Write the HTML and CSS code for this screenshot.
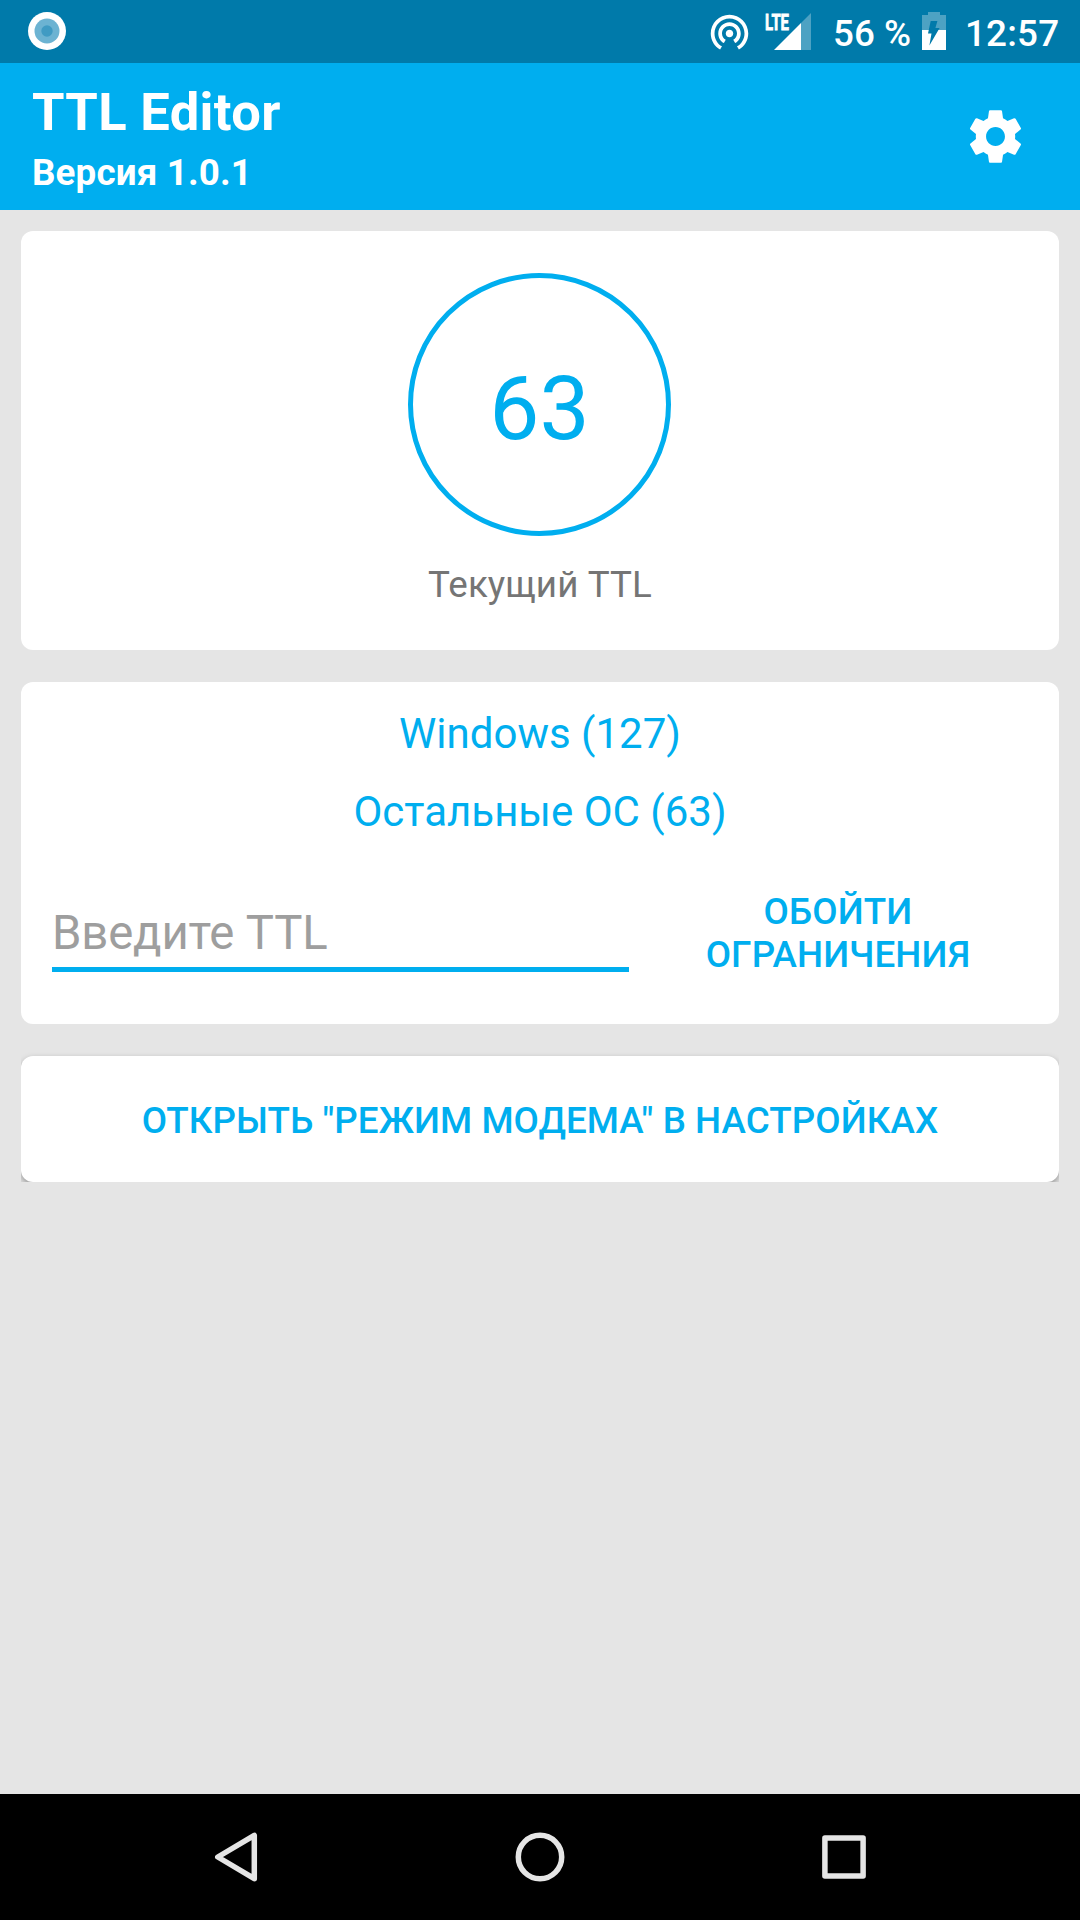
FILE: index.html
```html
<!DOCTYPE html>
<html lang="ru">
<head>
  <meta charset="utf-8" />
  <meta name="viewport" content="width=device-width, initial-scale=1" />
  <title>TTL Editor</title>
  <link rel="stylesheet" href="styles.css">
</head>
<body>
  <div class="screen">
    <div class="status">
      <svg class="notif" width="38" height="38" viewBox="0 0 38 38">
        <circle cx="19" cy="19" r="19" fill="#fff"/>
        <circle cx="19" cy="19" r="12.5" fill="#6cb3d2"/>
        <circle cx="19" cy="19" r="5.7" fill="#409bc3"/>
      </svg>
      <svg class="hotspot" width="45" height="45" viewBox="0 0 24 24">
        <path fill="#fff" d="M12 11c-1.1 0-2 .9-2 2s.9 2 2 2 2-.9 2-2-.9-2-2-2zm6 2c0-3.31-2.69-6-6-6s-6 2.69-6 6c0 2.22 1.21 4.15 3 5.19l1-1.74c-1.19-.7-2-1.97-2-3.45 0-2.21 1.79-4 4-4s4 1.79 4 4c0 1.48-.81 2.75-2 3.45l1 1.74c1.79-1.04 3-2.97 3-5.19zM12 3C6.48 3 2 7.48 2 13c0 3.7 2.01 6.92 4.99 8.65l1-1.73C5.61 18.53 4 15.96 4 13c0-4.42 3.58-8 8-8s8 3.58 8 8c0 2.96-1.61 5.53-4 6.92l1 1.73c2.99-1.73 5-4.95 5-8.65 0-5.52-4.48-10-10-10z"/>
      </svg>
      <svg class="signal" width="47" height="46" viewBox="0 -8 47 46">
        <path fill="#fff" fill-opacity=".3" d="M46 0v37H36V10z"/>
        <path fill="#fff" d="M36 10v27H9z"/>
        <text class="lte" x="0" y="16.7" textLength="24" lengthAdjust="spacingAndGlyphs">LTE</text>
      </svg>
      <span class="percent">56 %</span>
      <svg class="battery" width="24" height="38" viewBox="0 0 24 38">
        <path fill="#fff" fill-opacity=".3" d="M6 0h12v3h6v15H0V3h6z"/>
        <path fill="#fff" d="M0 18h24v20H0z"/>
        <path fill="#007aaa" d="M8.700 9h6.700l-2 7h4.200L7.400 33.500l2.100-12H6z"/>
      </svg>
      <span class="clock">12:57</span>
    </div>

    <div class="appbar">
      <div>
        <div class="title">TTL Editor</div>
        <div class="version">Версия 1.0.1</div>
      </div>
      <svg class="gear" width="63" height="63" viewBox="0 0 24 24">
        <path fill="#fff" d="M19.430 12.980c.04-.32.07-.64.07-.98s-.03-.66-.07-.98l2.110-1.650c.19-.15.24-.42.12-.64l-2-3.460c-.12-.22-.39-.3-.61-.22l-2.490 1c-.52-.4-1.080-.73-1.690-.98l-.38-2.650C14.460 2.180 14.250 2 14 2h-4c-.25 0-.46.18-.49.42l-.38 2.650c-.61.25-1.170.59-1.690.98l-2.490-1c-.23-.09-.49 0-.61.22l-2 3.460c-.13.22-.07.49.12.64l2.110 1.650c-.04.32-.07.65-.07.98s.03.66.07.98l-2.110 1.650c-.19.15-.24.42-.12.64l2 3.460c.12.22.39.3.61.22l2.490-1c.52.4 1.080.73 1.690.98l.38 2.650c.03.24.24.42.49.42h4c.25 0 .46-.18.49-.42l.38-2.650c.61-.25 1.170-.59 1.690-.98l2.490 1c.23.09.49 0 .61-.22l2-3.460c.12-.22.07-.49-.12-.64l-2.110-1.650zM12 15.600c-1.990 0-3.600-1.610-3.600-3.600s1.610-3.600 3.600-3.600 3.600 1.610 3.600 3.600-1.610 3.600-3.600 3.600z"/>
      </svg>
    </div>

    <main class="content">
      <div class="card current">
        <div class="ring">63</div>
        <div class="caption">Текущий TTL</div>
      </div>

      <div class="card presets">
        <div class="preset">Windows (127)</div>
        <div class="preset">Остальные ОС (63)</div>
        <div class="row">
          <input class="ttl" type="text" placeholder="Введите TTL" />
          <button class="bypass">Обойти ограничения</button>
        </div>
      </div>

      <div class="open-wrap">
        <button class="open">Открыть "Режим модема" в настройках</button>
      </div>
    </main>

    <div class="navbar">
      <svg width="60" height="60" viewBox="0 0 60 60"><path d="M48.300 8.300v43.400L11.800 30z"/></svg>
      <svg width="60" height="60" viewBox="0 0 60 60"><circle cx="30" cy="30" r="21.700"/></svg>
      <svg width="60" height="60" viewBox="0 0 60 60"><rect x="10.900" y="10.900" width="38.200" height="38.200"/></svg>
    </div>
  </div>
</body>
</html>
```

FILE: styles.css
```css
:root { --accent:#00aeef; --dark:#007aaa; --bg:#e5e5e5; --text:#757575; --hint:#9e9e9e; }
* { box-sizing: border-box; }
body { margin:0; font-family: Roboto, "Liberation Sans", sans-serif; background: var(--bg); }
svg { display: block; flex: none; }
button, input { font-family: inherit; border: 0; padding: 0; border-radius: 0; background: none; outline: none; }
button { color: var(--accent); font-size: 36.75px; font-weight: 500; text-transform: uppercase; cursor: pointer; }
.screen { width: 1080px; height: 1920px; display: flex; flex-direction: column; overflow: hidden; }

.status { height: 63px; background: var(--dark); color: #fff; display: flex; align-items: flex-start; padding-left: 28px; font-size: 36.75px; font-weight: 500; line-height: 43px; white-space: nowrap; }
.notif { margin-top: 12px; }
.hotspot { margin: 9px 0 0 641px; }
.signal { margin: 5px 0 0 13px; }
.lte { font-size: 22.5px; font-weight: 700; fill: #fff; stroke: #fff; stroke-width: .8; }
.percent { width: 89px; margin: 12px 0 0 21px; }
.battery { margin-top: 12px; }
.clock { margin: 12px 0 0 19px; letter-spacing: .2px; }

.appbar { height: 147px; background: var(--accent); color: #fff; display: flex; justify-content: space-between; padding: 19px 53px 0 32px; font-weight: 700; }
.title { font-size: 52.5px; line-height: 60px; letter-spacing: .35px; }
.version { margin-top: 9px; font-size: 36.75px; line-height: 44px; letter-spacing: .15px; }
.gear { margin-top: 23px; }

.content { flex: 1; padding: 21px; }
.card { background: #fff; border-radius: 12px; }
.current { height: 419px; padding-top: 42px; display: flex; flex-direction: column; align-items: center; }
.ring { width: 263px; height: 263px; margin-right: 1px; border: 5px solid var(--accent); border-radius: 50%; display: flex; align-items: center; justify-content: center; padding-top: 7px; color: var(--accent); font-size: 89.25px; }
.caption { margin-top: 27px; font-size: 36.75px; line-height: 44px; letter-spacing: .1px; color: var(--text); }

.presets { height: 342px; margin-top: 32px; padding: 27px 31px 0; }
.preset { margin-bottom: 28px; color: var(--accent); font-size: 42px; line-height: 50px; text-align: center; }
.row { display: flex; align-items: flex-start; margin-top: 53px; }
.ttl { width: 577px; height: 82px; padding: 8px 0 0; border-bottom: 5px solid var(--accent); font-size: 47.25px; letter-spacing: -.15px; }
.ttl::placeholder { color: var(--hint); opacity: 1; }
.bypass { width: 300px; margin-left: 59px; line-height: 43px; letter-spacing: .15px; }

/* shadow is cut off at the sides and below the button */
.open-wrap { margin-top: 26px; padding-top: 6px; overflow: hidden; }
.open { display: block; width: 100%; height: 126px; padding-top: 2px; background: #fff; border-radius: 12px; box-shadow: 0 3px 6px rgba(0,0,0,0.35); letter-spacing: .07px; }

.navbar { height: 126px; background: #000; display: flex; justify-content: center; align-items: center; gap: 244px; }
.navbar svg { fill: none; stroke: #e5e5e5; stroke-width: 5.5; stroke-linejoin: round; }
```
